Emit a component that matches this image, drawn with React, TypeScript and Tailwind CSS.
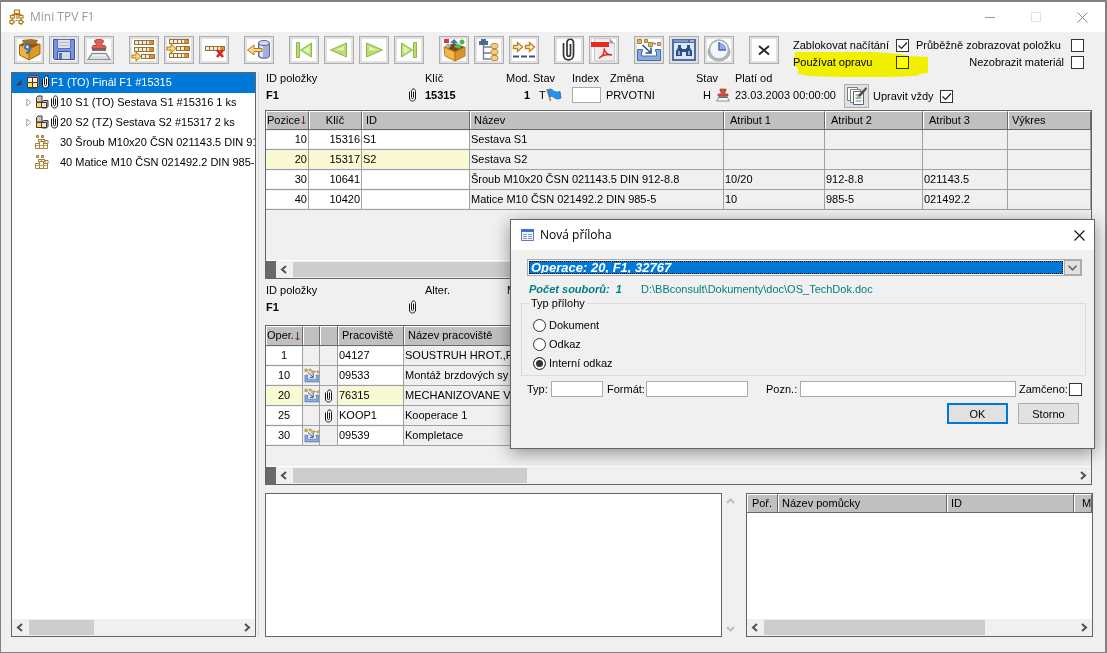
import React, { useState } from "react"
import clsx from "clsx"

type IconProps = { className?: string }

/* ---------- icons ---------- */

const Glyph: React.FC<{ children: React.ReactNode }> = ({ children }) => (
    <svg width="26" height="24" viewBox="0 0 26 24" fill="none" className="shrink-0" aria-hidden="true">{children}</svg>
)

const Clip: React.FC<IconProps> = ({ className }) => (
    <svg width="8" height="14" viewBox="0 0 8 14" fill="#fff" stroke="#111" className={clsx("shrink-0", className)} aria-hidden="true">
        <path d="M.5 3.500v6.500c0 4 6 4 6 0V3.500c0-3.500-4-3.500-4 0v6c0 1.500 2 1.500 2 0V3.500" strokeWidth="1" />
    </svg>
)

const Hierarchy: React.FC<IconProps> = ({ className }) => (
    <svg width="16" height="16" viewBox="0 0 16 16" fill="#fff6dc" stroke="#b07a14" strokeWidth="1.200" className={clsx("shrink-0", className)} aria-hidden="true">
        <path d="M5.500 1h5v3.500h-5zM1.500 6.500h4V9h-4zM10 6.500h4V9h-4zM8 4.500V10M3.500 6.500V5.500H12v1M3.500 9v1.500M12 9v1.500" />
        <path d="M1 11.500h2v-1l2.500 2.500L3 15.500v-1H1zM10 11.500h2v-1l2.500 2.500-2.500 2.500v-1h-2zM6.500 11.500h2" />
    </svg>
)

const PartsIcon: React.FC<IconProps> = ({ className }) => (
    <svg width="14" height="14" viewBox="0 0 14 14" fill="none" stroke="#a0803a" className={clsx("shrink-0", className)} aria-hidden="true">
        <path d="M1.500.5h2v2h-2zM6.500.5h2v2h-2z" fill="#d9b968" />
        <path d="M3 4.500h7M3.500 4v3M9.500 4v3M6.500 4v3" />
        <path d="M.5 8.500h4v5h-4zM4.500 6.500h4v7h-4zM8.500 8.500h4v5h-4zM10 5.500h3v3h-3z" fill="#fff" />
        <path d="M.5 10.500h12" stroke="#c99a3c" />
    </svg>
)

const BlockIcon: React.FC<IconProps & { full?: boolean }> = ({ full, className }) => (
    <svg width="14" height="14" viewBox="0 0 14 14" stroke="#4a3434" className={clsx("shrink-0", className)} aria-hidden="true">
        {full ? (
            <>
                <path d="M1.500 2.500l2-1.500h9.500v9.500l-2 2.500h-9.500z" fill="#c9c4bd" />
                <path d="M1.500 2.500h5v5h-5zM6.500 2.500h5v5h-5z" fill="#f4f0e4" />
                <path d="M1.500 7.500h5v5h-5z" fill="#ffe14a" />
                <path d="M6.500 7.500h5v5h-5z" fill="#fff3a6" />
            </>
        ) : (
            <>
                <path d="M1.500 2.500l1.500-1.500h4v6h-5.500z" fill="#cfcac8" />
                <path d="M7 7l1.500-1.500h4.500v6l-1.500 1.500h-4.500z" fill="#bdb6b4" />
                <path d="M1.500 7.500h5v5h-5z" fill="#ffe14a" />
                <path d="M6.500 7.500h5v5h-5z" fill="#e8e4e2" />
            </>
        )}
    </svg>
)

const StampIcon: React.FC<IconProps> = ({ className }) => (
    <svg width="14" height="14" viewBox="0 0 14 14" className={clsx("shrink-0", className)} aria-hidden="true">
        <path d="M4 1h6v2L9 4v2h3v2H2V6h3V4L4 3z" fill="#d5503c" stroke="#96382c" strokeWidth=".6" />
        <path d="M2.500 9.500h9l2 3.500H.5z" fill="#f4f6f8" stroke="#8b929c" />
        <path d="M2.500 9h9" stroke="#444" />
    </svg>
)

const FlagIcon = () => (
    <svg width="17" height="15" viewBox="0 0 17 15" className="shrink-0" aria-hidden="true">
        <path d="M1 1l3.500 12" stroke="#b98846" strokeWidth="1.600" />
        <path d="M2 2c2-1.500 3.500-1 5 .5s4 2 7 1l1 6.500c-3 1.500-5 1-7-.5S5 8 3.800 9z" fill="#2293f0" stroke="#1769b8" strokeWidth=".8" />
    </svg>
)

const AssemblyPaths = () => (
    <>
        <path d="M1.500 1.500h4v4h-4zM8.500 1.500h3v3h-3zM12.500 4.500h4v4h-4zM21.500 4.500h3v3h-3z" fill="#dcb65a" stroke="#a6843c" />
        <path d="M17 5l3 1" stroke="#a6843c" strokeWidth="1.500" />
        <path d="M1.500 11.500h5v2h-1v4.500h15v-4.500h-1v-2h5v11h-23z" fill="#8aabdc" stroke="#466ca8" />
        <path d="M6.500 7l8 7.500M15 9.500v5.500H9.500" stroke="#27518f" strokeWidth="1.600" fill="none" />
    </>
)

const AssemblyIcon = () => (
    <svg width="16" height="15" viewBox="0 0 26 24" className="shrink-0" aria-hidden="true"><AssemblyPaths /></svg>
)

const Film: React.FC<{ x: number; y: number; w?: number }> = ({ x, y, w = 20 }) => (
    <g>
        <rect x={x} y={y} width={w} height="5" fill="#8f7440" />
        <path d={`M${x + 1} ${y + 2.5}h${w - 6}`} stroke="#f5ecd4" strokeWidth="3" strokeDasharray="3 1" />
        <rect x={x + w - 5} y={y + 1} width="4" height="3" fill="#f28a1e" />
    </g>
)

const Arrow: React.FC<{ x: number; y: number }> = ({ x, y }) => (
    <path d={`M${x} ${y + 3}h4V${y}l5 4.500-5 4.500v-3h-4z`} fill="#ffd67a" stroke="#b37616" />
)

const BoxIcon = () => (
    <Glyph>
        <path d="M3 7l8-4 13 3-10 5z" fill="#8a5414" />
        <path d="M6 2l9-1 7 1-2 4-12 1z" fill="#a96d20" />
        <path d="M3 7l10 4v11L4 17z" fill="#f3b03a" />
        <path d="M13 11l11-5v10l-11 6z" fill="#e09a22" />
        <path d="M3.500 7L13 11l11-5M13 11v11M3.500 7v10L13 22l11-6V6" stroke="#9c6414" />
        <path d="M7 8l4-2 2 3-3 3z" fill="#e4edfa" />
        <path d="M14 6c-3-1-5 1-5 4l3 2M10 15c3 0 5-3 4-6" stroke="#2c6fc4" strokeWidth="2" />
    </Glyph>
)

const SaveIcon = () => (
    <Glyph>
        <path d="M2.500 1.500h21v20h-20l-1-1z" fill="#7695e0" stroke="#3d4fa4" />
        <path d="M6.500 1.500h13v9h-13z" fill="#dfe2e8" stroke="#5871b8" />
        <path d="M8 4.500h10M8 7.500h10" stroke="#b0b7c6" />
        <path d="M6.500 13.500h13v8h-13z" fill="#d5d9e0" stroke="#3c52a4" />
        <path d="M8 15h3v6H8z" fill="#5571c4" />
    </Glyph>
)

const BigStampIcon = () => (
    <Glyph>
        <path d="M8.500 3c0-2 9-2 9 0s-2 2-2 4.500h3c1 0 1.500 1 1.500 3H6c0-2 .5-3 1.500-3h3c0-2.500-2-2.500-2-4.500z" fill="#e0604c" stroke="#b0483a" />
        <path d="M6 12h14" stroke="#303030" strokeWidth="1.400" />
        <path d="M6 15.500h14l4 6h-22z" fill="#f4f5f7" stroke="#8b929c" strokeWidth="1.400" />
        <path d="M5 19h16" stroke="#c5cad0" />
    </Glyph>
)

const RowsAddIcon = () => (
    <Glyph><Film x={3} y={2} /><Film x={3} y={9} /><Film x={10} y={16} w={14} /><Arrow x={1} y={14} /></Glyph>
)

const RowsInsertIcon = () => (
    <Glyph><Film x={3} y={1} /><Film x={10} y={8} w={14} /><Film x={3} y={15} /><Arrow x={1} y={6} /></Glyph>
)

const RowDeleteIcon = () => (
    <Glyph>
        <Film x={4} y={8} w={20} />
        <path d="M16 12l6 7M22 12l-6 7" stroke="#e01b24" strokeWidth="2.600" />
    </Glyph>
)

const DatabaseIcon = () => (
    <Glyph>
        <path d="M12.500 5v13c0 3 11 3 11 0V5z" fill="#a7adda" stroke="#5a5f96" />
        <path d="M14 7v11c1 1 3 1 3 1V7z" fill="#e3e5f6" />
        <ellipse cx="18" cy="5" rx="5.500" ry="2.500" fill="#d7daf0" stroke="#5a5f96" />
        <path d="M16 10.500H8V7l-6.500 5L8 17v-3.500h8z" fill="#ffd98b" stroke="#b37616" />
    </Glyph>
)

const navFill = "#b9dd6e"
const navStroke = "#8ab84c"
const FirstIcon = () => (
    <Glyph><path d="M5.500 4.500h3v15h-3zM20.500 5v14L9.500 12z" fill={navFill} stroke={navStroke} /><path d="M18.500 8v8l-6-4z" fill="#e2f5b8" /></Glyph>
)
const PrevIcon = () => (
    <Glyph><path d="M20.500 5v14L4.500 12z" fill={navFill} stroke={navStroke} /><path d="M18 8.500v4l-9-.5z" fill="#e2f5b8" /></Glyph>
)
const NextIcon = () => (
    <Glyph><path d="M5.500 5v14l16-7z" fill={navFill} stroke={navStroke} /><path d="M8 8.500v4l9-.5z" fill="#e2f5b8" /></Glyph>
)
const LastIcon = () => (
    <Glyph><path d="M17.500 4.500h3v15h-3zM5.500 5v14l11-7z" fill={navFill} stroke={navStroke} /><path d="M7.500 8v8l6-4z" fill="#e2f5b8" /></Glyph>
)

const KitIcon = () => (
    <Glyph>
        <path d="M3 9l10-4 11 4-10 5z" fill="#7b4a10" />
        <path d="M3 1h5v4H3z" fill="#d23c3c" /><path d="M13 1l4 4h-8z" fill="#3b78b8" />
        <circle cx="21" cy="4" r="2.500" fill="#4fb45a" /><path d="M7 5l3 3-3 3-3-3z" fill="#a8b0b8" />
        <path d="M16 5l5 3-3 3-5-2z" fill="#58b868" />
        <path d="M3 9l11 5v9L4 18z" fill="#f5b544" stroke="#b8781c" /><path d="M14 14l10-5v9l-10 5z" fill="#d9942a" stroke="#b8781c" />
    </Glyph>
)

const TreeIcon = () => (
    <Glyph>
        <path d="M7.500 5v16h9M7.500 9h9M7.500 15h9" stroke="#6d8296" strokeWidth="1.400" />
        <path d="M5 1h5v2h2v4H3V3h2z" fill="#476f90" />
        <rect x="15" y="5.500" width="7" height="5" rx="2" fill="#f5cb83" stroke="#c08c46" />
        <rect x="15" y="11.500" width="7" height="5" rx="2" fill="#f5cb83" stroke="#c08c46" />
        <rect x="15" y="17.500" width="7" height="5" rx="2" fill="#f5cb83" stroke="#c08c46" />
    </Glyph>
)

const FlowIcon = () => (
    <Glyph>
        <path d="M2.500 7.500h4v-3l5 4.500-5 4.500v-3h-4zM14.500 7.500h4v-3l5 4.500-5 4.500v-3h-4z" fill="#fff1cc" stroke="#c08427" strokeWidth="1.400" />
        <path d="M2 18.500h6M10 18.500h6M18 18.500h6" stroke="#3a577c" strokeWidth="2.200" />
    </Glyph>
)

const BigClipIcon = () => (
    <Glyph>
        <path d="M7.500 5v12c0 6.500 10 6.500 10 0V5c0-5-6.500-5-6.500 0v11c0 3 3.500 3 3.500 0V6" stroke="#333" strokeWidth="1.700" />
    </Glyph>
)

const PdfIcon = () => (
    <Glyph>
        <path d="M3.500.5h15l5 5v17.500h-20z" fill="#eceef0" stroke="#c5c8cc" />
        <path d="M18.500.5v5h5z" fill="#9ba1a6" /><path d="M0 4h18v5H0z" fill="#e52b20" />
        <path d="M8 20c4-2 6-6 5-9.500 1 4 4 6.500 8 6.500-4-1-9 0-13 3z" stroke="#e52b20" strokeWidth="1.500" />
    </Glyph>
)

const FindIcon = () => (
    <Glyph>
        <rect x="1" y="1" width="24" height="22" fill="#4c6fa8" /><path d="M3 5h20v16H3z" fill="#dce7f5" />
        <path d="M3 3h14" stroke="#a9c1e4" /><path d="M19 3h4" stroke="#fff" />
        <path d="M7 7h3v3h1v8H5v-5l2-3zM16 7h3v3l2 3v5h-6v-8h1z" fill="#2b4c86" /><path d="M11 11h4v3h-4z" fill="#2b4c86" />
        <path d="M7 13h2v4H7zM17 13h2v4h-2z" fill="#8fabd8" />
    </Glyph>
)

const ClockIcon = () => (
    <Glyph>
        <ellipse cx="13" cy="14" rx="11" ry="9" fill="#b8bcc2" stroke="#a4a8ae" /><circle cx="13" cy="11.500" r="9.500" fill="#f3f6fb" stroke="#a9aeb6" strokeWidth="1.500" />
        <path d="M13 12V4.500a7.500 7.500 0 0 1 7.500 7.500z" fill="#89a9ea" /><path d="M13 4v8h7" stroke="#4c66b8" strokeWidth="1.500" />
    </Glyph>
)

const CloseXIcon = () => (
    <Glyph><path d="M8 8l10 8.500M18 8L8 16.500" stroke="#203020" strokeWidth="2" /></Glyph>
)

const EditIcon = () => (
    <svg width="22" height="20" viewBox="0 0 22 20" aria-hidden="true">
        <path d="M1.500 1.500h10v13h-10z" fill="#fff" stroke="#77807f" />
        <path d="M4.500 3.500h10v13h-10z" fill="#fff" stroke="#77807f" />
        <path d="M7.500 5.500h10v13h-10z" fill="#fff" stroke="#5c6766" />
        <path d="M9.500 9h6M9.500 12h6M9.500 15h6" stroke="#3e9a9a" />
        <path d="M20 1l-8 8-1.500 4 3.500-2 7-8z" fill="#5b4a3c" /><path d="M12 9l-1.500 4 3.500-2z" fill="#e9b04a" />
    </svg>
)

const Chevron: React.FC<{ dir: "left" | "right" | "up" | "down"; className?: string }> = ({ dir, className }) => {
    const d = dir === "left" ? "M7 2L3 5.500 7 9" : dir === "right" ? "M4 2l4 3.500L4 9" : dir === "up" ? "M2 7l3.500-3.500L9 7" : "M2 4l3.500 3.500L9 4"
    return (
        <svg width="11" height="11" viewBox="0 0 11 11" fill="none" stroke="currentColor" strokeWidth="2" className={className} aria-hidden="true"><path d={d} /></svg>
    )
}

const SortArrow = () => (
    <svg width="5" height="9" viewBox="0 0 5 9" fill="none" stroke="#6b2a2a" className="ml-px inline-block" aria-hidden="true"><path d="M2.500 0v8M.5 6l2 2 2-2" /></svg>
)

/* ---------- controls ---------- */

const toolGroups: { label: string; icon: React.FC }[][] = [
    [{ label: "Položka", icon: BoxIcon }, { label: "Uložit", icon: SaveIcon }, { label: "Schválit", icon: BigStampIcon }],
    [{ label: "Přidat řádek", icon: RowsAddIcon }, { label: "Vložit řádek", icon: RowsInsertIcon }, { label: "Smazat řádek", icon: RowDeleteIcon }],
    [{ label: "Načíst", icon: DatabaseIcon }],
    [{ label: "První", icon: FirstIcon }, { label: "Předchozí", icon: PrevIcon }, { label: "Další", icon: NextIcon }, { label: "Poslední", icon: LastIcon }],
    [{ label: "Sestava", icon: KitIcon }, { label: "Strom", icon: TreeIcon }, { label: "Postup", icon: FlowIcon }],
    [{ label: "Přílohy", icon: BigClipIcon }, { label: "PDF", icon: PdfIcon }],
    [{ label: "Montáž", icon: () => <Glyph><AssemblyPaths /></Glyph> }, { label: "Hledat", icon: FindIcon }, { label: "Čas", icon: ClockIcon }],
    [{ label: "Zavřít", icon: CloseXIcon }],
]

const Check: React.FC<{ id: string; defaultChecked?: boolean }> = ({ id, defaultChecked }) => (
    <span className="relative block size-[13px] shrink-0">
        <input id={id} type="checkbox" defaultChecked={defaultChecked} className="peer block size-[13px] appearance-none border border-[#333] bg-white" />
        <svg viewBox="0 0 13 13" fill="none" stroke="#222" strokeWidth="1.200" className="pointer-events-none absolute inset-0 hidden peer-checked:block" aria-hidden="true">
            <path d="M2.500 6.500l3 3 5.500-6" />
        </svg>
    </span>
)

const HScroll: React.FC<{ thumb: number; marker?: boolean }> = ({ thumb, marker }) => (
    <div className="flex h-[17px] items-stretch bg-[#f0f0f0] text-[#505050]">
        {marker && <div className="w-[10px] bg-[#696969]" />}
        <button aria-label="Posunout vlevo" className="flex w-[17px] items-center justify-center"><Chevron dir="left" /></button>
        <div className="my-px flex-1"><div className="h-full bg-[#cdcdcd]" style={{ width: `${thumb}%` }} /></div>
        <button aria-label="Posunout vpravo" className="flex w-[17px] items-center justify-center"><Chevron dir="right" /></button>
    </div>
)

const Th: React.FC<{ children?: React.ReactNode; className?: string }> = ({ children, className }) => (
    <th className={clsx("overflow-hidden border-t border-r border-b border-t-white border-r-[#696969] border-b-[#696969] bg-[#c0c0c0] p-0 pb-[2px] font-normal whitespace-nowrap shadow-[inset_1px_0_0_#fff]", className)}>{children}</th>
)

const Td: React.FC<{ children?: React.ReactNode; className?: string; field?: boolean; active?: boolean }> = ({ children, className, field, active }) => (
    <td className="h-5 overflow-hidden border-r border-b border-[#a0a0a0] p-0 whitespace-nowrap">
        <div className={clsx("h-[17px] px-px leading-[17px]", field && (active ? "bg-[#fafad2]" : "bg-white"), className)}>{children}</div>
    </td>
)

/* ---------- data ---------- */

const positions = [
    { pos: 10, key: 15316, id: "S1", name: "Sestava S1", attrs: ["", "", ""] },
    { pos: 20, key: 15317, id: "S2", name: "Sestava S2", attrs: ["", "", ""], active: true },
    { pos: 30, key: 10641, id: "", name: "Šroub M10x20 ČSN 021143.5 DIN 912-8.8", attrs: ["10/20", "912-8.8", "021143.5"] },
    { pos: 40, key: 10420, id: "", name: "Matice M10 ČSN 021492.2 DIN 985-5", attrs: ["10", "985-5", "021492.2"] },
]

const operations = [
    { no: 1, work: "04127", name: "SOUSTRUH HROT.,PR" },
    { no: 10, work: "09533", name: "Montáž brzdových sy", assembly: true },
    { no: 20, work: "76315", name: "MECHANIZOVANE VA", assembly: true, clip: true, active: true },
    { no: 25, work: "KOOP1", name: "Kooperace 1", clip: true },
    { no: 30, work: "09539", name: "Kompletace", assembly: true },
]

const treeRows = [
    { text: "10 S1 (TO) Sestava S1 #15316 1 ks", node: true },
    { text: "20 S2 (TZ) Sestava S2 #15317 2 ks", node: true },
    { text: "30 Šroub M10x20 ČSN 021143.5 DIN 912", node: false },
    { text: "40 Matice M10 ČSN 021492.2 DIN 985-5 #", node: false },
]

/* ---------- panels ---------- */

const TitleBar = () => (
    <header className="flex h-[30px] items-center bg-white pl-2 font-['Open_Sans',sans-serif] text-xs text-[#999]">
        <Hierarchy />
        <h1 className="ml-[5px] flex-1">Mini TPV F1</h1>
        <button aria-label="Minimalizovat" className="flex h-full w-[46px] items-center justify-center"><span className="h-px w-[10px] bg-[#999]" /></button>
        <button aria-label="Maximalizovat" disabled className="flex h-full w-[46px] items-center justify-center"><span className="size-[10px] border border-[#e4e4e4]" /></button>
        <button aria-label="Zavřít okno" className="flex h-full w-[46px] items-center justify-center">
            <svg width="11" height="11" viewBox="0 0 11 11" stroke="#888" aria-hidden="true"><path d="M.5.5l10 10M10.500.5l-10 10" /></svg>
        </button>
    </header>
)

const Toolbar = () => (
    <div className="flex h-10 items-start justify-between pt-1 pr-[21px] pl-[13px]">
        <div className="flex gap-[15px]">
            {toolGroups.map((group, i) => (
                <div key={i} className="flex gap-[5px]">
                    {group.map(({ label, icon: Icon }) => (
                        <button key={label} aria-label={label} className="flex h-7 w-[30px] items-center justify-center border border-[#adadad] bg-[#e1e1e1]">
                            <span className="flex h-[22px] w-6 items-center justify-center bg-white"><Icon /></span>
                        </button>
                    ))}
                </div>
            ))}
        </div>
        <div className="relative grid grid-cols-[103px_13px_162px_13px] items-center pt-px">
            <label htmlFor="lock" className="leading-[17px] whitespace-nowrap">Zablokovat načítání</label>
            <Check id="lock" defaultChecked />
            <label htmlFor="live" className="pl-[7px] leading-[17px] whitespace-nowrap">Průběžně zobrazovat položku</label>
            <Check id="live" />
            <label htmlFor="fix" className="leading-[17px] whitespace-nowrap">Používat opravu</label>
            <Check id="fix" />
            <label htmlFor="hide" className="pr-[7px] text-right leading-[17px] whitespace-nowrap">Nezobrazit materiál</label>
            <Check id="hide" />
            {/* highlighter stroke over the "Používat opravu" option */}
            <svg width="134" height="27" viewBox="0 0 134 27" className="pointer-events-none absolute top-[15px] left-[2px] mix-blend-multiply" aria-hidden="true">
                <path d="M0 1h80l24 2 10 2 19 1v16l-8 1-4 2-28 1H46l-34-1-2-1-7-1v-6l-3-2z" fill="#ffff00" />
            </svg>
        </div>
    </div>
)

const TreePanel = () => (
    <aside className="flex w-[245px] shrink-0 flex-col overflow-hidden border border-[#646464] bg-white">
        <ul className="flex-1">
            <li className="flex h-5 items-center bg-[#0078d7] pb-[2px] pl-[3px] text-white">
                <svg width="7" height="7" viewBox="0 0 7 7" aria-hidden="true"><path d="M6.500.5v6h-6z" fill="#404040" /></svg>
                <BlockIcon full className="ml-1" />
                <Clip className="mr-px ml-[2px]" />
                <span className="whitespace-nowrap">F1 (TO) Finál F1 #15315</span>
            </li>
            {treeRows.map((row) => (
                <li key={row.text} className="flex h-5 items-center pb-[2px] pl-[14px]">
                    <span className="w-[9px] shrink-0">
                        {row.node && <svg width="6" height="9" viewBox="0 0 6 9" fill="#fff" stroke="#a0a0a0" aria-hidden="true"><path d="M.8 1l4 3.500-4 3.500z" /></svg>}
                    </span>
                    {row.node ? <BlockIcon /> : <PartsIcon />}
                    <span className="ml-[2px] w-[9px] shrink-0">{row.node && <Clip />}</span>
                    <span className="min-w-0 overflow-hidden whitespace-nowrap">{row.text}</span>
                </li>
            ))}
        </ul>
        <HScroll thumb={31} />
    </aside>
)

const ItemInfo = () => (
    <section className="flex h-[38px] pl-px">
        <div className="w-[142px]">
            <p className="h-3 leading-3">ID položky</p>
            <p className="leading-[23px] font-bold">F1</p>
        </div>
        <div className="flex w-[17px] items-end pb-2"><Clip className="ml-px" /></div>
        <div className="w-[76px]">
            <p className="h-3 leading-3">Klíč</p>
            <p className="leading-[23px] font-bold">15315</p>
        </div>
        <div className="w-[32px] pl-[5px]">
            <p className="h-3 leading-3">Mod.</p>
            <p className="pr-[3px] text-right leading-[23px] font-bold">1</p>
        </div>
        <div className="w-[39px]">
            <p className="h-3 leading-3">Stav</p>
            <div className="flex h-[22px] items-center pl-[6px]">T<FlagIcon /></div>
        </div>
        <div className="w-[34px]">
            <label htmlFor="index" className="block h-3 leading-3">Index</label>
            <input id="index" className="mt-[3px] block h-4 w-[29px] border border-[#ababab] bg-white px-px" />
        </div>
        <div className="w-[90px]">
            <p className="h-3 pl-1 leading-3">Změna</p>
            <p className="leading-[23px]">PRVOTNI</p>
        </div>
        <div className="w-[39px]">
            <p className="h-3 leading-3">Stav</p>
            <div className="flex h-[22px] items-center gap-[5px] pl-[7px]">H<StampIcon /></div>
        </div>
        <div className="w-[109px]">
            <p className="h-3 leading-3">Platí od</p>
            <p className="leading-[23px]">23.03.2003 00:00:00</p>
        </div>
        <div className="flex items-center self-end pb-[2px]">
            <button aria-label="Upravit" className="flex h-6 w-[25px] items-center justify-center border border-[#adadad] bg-[#e1e1e1]"><EditIcon /></button>
            <label htmlFor="always" className="w-[71px] pl-1 whitespace-nowrap">Upravit vždy</label>
            <Check id="always" defaultChecked />
        </div>
    </section>
)

const PositionGrid = () => (
    <div className="flex h-[169px] flex-col overflow-hidden border border-[#646464]">
        <table className="w-full table-fixed border-separate border-spacing-0 text-left">
            <colgroup>
                <col className="w-[43px]" /><col className="w-[53px]" /><col className="w-[108px]" /><col className="w-[254px]" />
                <col className="w-[101px]" /><col className="w-[98px]" /><col className="w-[85px]" /><col />
            </colgroup>
            <thead>
                <tr className="h-[19px]">
                    <Th className="pl-px">Pozice<SortArrow /></Th>
                    <Th className="text-center">Klíč</Th>
                    <Th className="pl-1">ID</Th>
                    <Th className="pl-1">Název</Th>
                    <Th className="pl-[6px]">Atribut 1</Th>
                    <Th className="pl-[6px]">Atribut 2</Th>
                    <Th className="pl-[6px]">Atribut 3</Th>
                    <Th className="pl-1">Výkres</Th>
                </tr>
            </thead>
            <tbody>
                {positions.map((p) => (
                    <tr key={p.pos}>
                        <Td field active={p.active} className="text-right">{p.pos}</Td>
                        <Td field active={p.active} className="text-right">{p.key}</Td>
                        <Td field active={p.active}>{p.id}</Td>
                        <Td>{p.name}</Td>
                        {p.attrs.map((a, i) => <Td key={i}>{a}</Td>)}
                        <Td />
                    </tr>
                ))}
            </tbody>
        </table>
        <div className="mt-auto border-t border-white"><HScroll thumb={30} marker /></div>
    </div>
)

const OperationInfo = () => (
    <section className="flex h-[46px] pt-[5px] pl-px">
        <div className="w-[142px]">
            <p className="h-3 leading-3">ID položky</p>
            <p className="leading-[22px] font-bold">F1</p>
        </div>
        <div className="flex w-[17px] items-end pb-[11px]"><Clip className="ml-px" /></div>
        <p className="w-[82px] leading-3">Alter.</p>
        <p className="leading-3">Mod.</p>
    </section>
)

const OperationGrid = () => (
    <div className="flex h-[160px] flex-col overflow-hidden border border-[#646464]">
        <table className="w-full table-fixed border-separate border-spacing-0 text-left">
            <colgroup>
                <col className="w-[37px]" /><col className="w-[17px]" /><col className="w-[18px]" /><col className="w-[66px]" /><col />
            </colgroup>
            <thead>
                <tr className="h-5">
                    <Th className="pl-px">Oper.<SortArrow /></Th>
                    <Th /><Th />
                    <Th className="pl-1">Pracoviště</Th>
                    <Th className="pl-1">Název pracoviště</Th>
                </tr>
            </thead>
            <tbody>
                {operations.map((o) => (
                    <tr key={o.no}>
                        <Td field active={o.active} className="text-center">{o.no}</Td>
                        <Td className="flex items-center">{o.assembly && <AssemblyIcon />}</Td>
                        <Td className="flex items-center justify-center">{o.clip && <Clip />}</Td>
                        <Td field active={o.active}>{o.work}</Td>
                        <Td>{o.name}</Td>
                    </tr>
                ))}
            </tbody>
        </table>
        <div className="mt-auto border-t border-white"><HScroll thumb={30} marker /></div>
    </div>
)

const BottomPanels = () => (
    <div className="mt-2 flex min-h-36 flex-1">
        <textarea aria-label="Text operace" className="flex-1 resize-none border border-[#646464] bg-white p-1 outline-none" />
        <div className="flex w-[17px] flex-col items-center justify-between py-[3px] text-[#bfbfbf]">
            <Chevron dir="up" />
            <Chevron dir="down" />
        </div>
        <div className="-mr-px ml-[7px] flex w-[347px] flex-col overflow-hidden border border-[#646464] bg-white">
            <table className="w-full table-fixed border-separate border-spacing-0 text-left">
                <colgroup><col className="w-[31px]" /><col className="w-[169px]" /><col className="w-[127px]" /><col /></colgroup>
                <thead>
                    <tr className="h-[19px]">
                        <Th className="text-center">Poř.</Th>
                        <Th className="pl-1">Název pomůcky</Th>
                        <Th className="pl-1">ID</Th>
                        <Th className="pl-2">M</Th>
                    </tr>
                </thead>
            </table>
            <div className="mt-auto"><HScroll thumb={71} /></div>
        </div>
    </div>
)

const fieldClass = "block h-4 border border-[#ababab] bg-white px-px outline-none"

const AttachmentDialog = () => {
    const [kind, setKind] = useState("Interní odkaz")
    return (
        <div role="dialog" aria-labelledby="dialog-title" className="absolute top-[217px] right-[10px] h-[230px] w-[585px] border border-[#646464] bg-[#f0f0f0] shadow-[0_4px_16px_rgba(0,0,0,0.4)]">
            <div className="flex h-[30px] items-center bg-white pr-[9px] pl-[10px] font-['Open_Sans',sans-serif] text-xs">
                <svg width="13" height="12" viewBox="0 0 13 12" aria-hidden="true">
                    <path d="M.5.5h12v11H.5z" fill="#eef4fd" stroke="#5a7dbb" /><path d="M0 0h13v3H0z" fill="#3c6fd8" />
                    <path d="M2 5.500h4M7 5.500h4M2 7.500h4M7 7.500h4M2 9.500h4M7 9.500h4" stroke="#7f9cc9" />
                </svg>
                <h2 id="dialog-title" className="ml-[6px] flex-1">Nová příloha</h2>
                <button aria-label="Zavřít dialog">
                    <svg width="11" height="11" viewBox="0 0 11 11" stroke="#111" strokeWidth="1.100" aria-hidden="true"><path d="M.5.5l10 10M10.500.5l-10 10" /></svg>
                </button>
            </div>
            <div className="px-[10px] pt-[9px]">
                <div className="mr-[2px] ml-[6px] flex h-[17px] border border-[#ababab] bg-white">
                    <select aria-label="Operace" className="m-px min-w-0 flex-1 appearance-none border border-dotted border-black bg-[#0078d7] px-px text-[13px] leading-3 font-bold text-white italic outline-none">
                        <option>Operace: 20, F1, 32767</option>
                    </select>
                    <span className="pointer-events-none flex w-[17px] items-center justify-center border border-[#ababab] bg-[#e1e1e1] text-[#555]">
                        <svg width="9" height="6" viewBox="0 0 9 6" fill="none" stroke="currentColor" strokeWidth="1.300" aria-hidden="true"><path d="M.5.8l4 4 4-4" /></svg>
                    </span>
                </div>
                <div className="flex pl-2 text-[#008080]">
                    <p className="w-[112px] pt-[6px] leading-[14px] font-bold whitespace-pre italic">Počet souborů:  1</p>
                    <p className="pt-[6px] leading-[14px]">D:\BBconsult\Dokumenty\doc\OS_TechDok.doc</p>
                </div>
                <fieldset className="-mr-[2px] h-[80px] border border-[#dcdcdc] pl-[11px]">
                    <legend className="-ml-[4px] px-[2px] leading-[14px]">Typ přílohy</legend>
                    <div className="flex flex-col gap-[5px] pt-2">
                        {["Dokument", "Odkaz", "Interní odkaz"].map((k) => (
                            <label key={k} className="flex h-[14px] items-center gap-[3px]">
                                <input
                                    type="radio"
                                    name="kind"
                                    checked={kind === k}
                                    onChange={() => setKind(k)}
                                    className="size-[13px] appearance-none rounded-full border border-[#333] bg-white checked:bg-[#333] checked:shadow-[inset_0_0_0_2px_#fff]"
                                />
                                {k}
                            </label>
                        ))}
                    </div>
                </fieldset>
                <div className="mt-[5px] mr-[2px] flex items-center pl-[6px]">
                    <label htmlFor="type" className="w-6">Typ:</label>
                    <input id="type" className={clsx(fieldClass, "w-[52px]")} />
                    <label htmlFor="format" className="w-[43px] pl-1">Formát:</label>
                    <input id="format" className={clsx(fieldClass, "w-[102px]")} />
                    <label htmlFor="note" className="w-[52px] pl-[18px]">Pozn.:</label>
                    <input id="note" className={clsx(fieldClass, "min-w-0 flex-1")} />
                    <label htmlFor="locked" className="w-[53px] pl-[3px]">Zamčeno:</label>
                    <Check id="locked" />
                </div>
                <div className="mt-[6px] flex justify-end gap-[10px] pr-[5px]">
                    <button className="h-[21px] w-[61px] border-2 border-[#0078d7] bg-[#e1e1e1]">OK</button>
                    <button className="h-[21px] w-[61px] border border-[#adadad] bg-[#e1e1e1]">Storno</button>
                </div>
            </div>
        </div>
    )
}

export default function App() {
    return (
        <div className="relative flex min-h-screen flex-col border-t-2 border-r-2 border-b border-l border-[#828282] bg-[#f0f0f0] font-['Liberation_Sans',Arial,sans-serif] text-[11px] leading-[14px] text-black">
            <TitleBar />
            <Toolbar />
            <main className="flex flex-1 pr-[13px] pb-[15px] pl-[10px]">
                <TreePanel />
                <div className="ml-[2px] w-[7px] shrink-0 border-l border-[#dcdcdc]" />
                <div className="flex min-w-0 flex-1 flex-col">
                    <ItemInfo />
                    <PositionGrid />
                    <OperationInfo />
                    <OperationGrid />
                    <BottomPanels />
                </div>
            </main>
            <AttachmentDialog />
        </div>
    )
}
